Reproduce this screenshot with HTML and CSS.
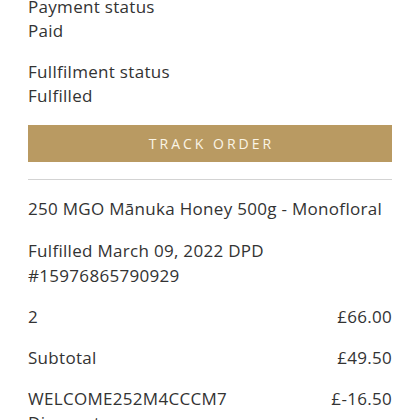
FILE: index.html
```html
<!DOCTYPE html>
<html lang="en">
<head>
<meta charset="utf-8">
<link rel="stylesheet" href="styles.css">
</head>
<body>
<main class="order">
  <section class="status">
    <div class="status-label">Payment status</div>
    <div class="status-value">Paid</div>
  </section>
  <section class="status">
    <div class="status-label">Fullfilment status</div>
    <div class="status-value">Fulfilled</div>
  </section>
  <button class="track-btn">TRACK ORDER</button>
  <hr class="divider">
  <div class="product-title">250 MGO Mānuka Honey 500g - Monofloral</div>
  <div class="fulfil-info">Fulfilled March 09, 2022 DPD<br>#15976865790929</div>
  <div class="row"><span>2</span><span>£66.00</span></div>
  <div class="row"><span>Subtotal</span><span>£49.50</span></div>
  <div class="row"><span>WELCOME252M4CCCM7<br>Discount</span><span>£-16.50</span></div>
</main>
</body>
</html>
```
FILE: styles.css
```css
html, body {
  margin: 0;
  padding: 0;
  background: #ffffff;
}
body {
  font-family: "Open Sans", "Liberation Sans", sans-serif;
  font-size: 17px;
  line-height: 24.5px;
  letter-spacing: 0.3px;
  color: #333333;
}
.order {
  padding: 0 28px;
  margin-top: -5.5px;
}
.status {
  margin-bottom: 16px;
}
.track-btn {
  display: block;
  width: 100%;
  height: 37px;
  margin-top: 16px;
  border: 0;
  background: #b99a62;
  color: #fbf5e6;
  font-family: "Open Sans", "Liberation Sans", sans-serif;
  font-size: 14px;
  letter-spacing: 3px;
  padding: 0 0 0 3px;
}
.divider {
  border: 0;
  border-top: 1px solid #d3d3d3;
  margin: 17px 0 17.5px;
}
.product-title {
  margin-bottom: 17.5px;
}
.fulfil-info {
  margin-bottom: 16.5px;
}
.row {
  display: flex;
  justify-content: space-between;
  margin-bottom: 16.5px;
}
```
